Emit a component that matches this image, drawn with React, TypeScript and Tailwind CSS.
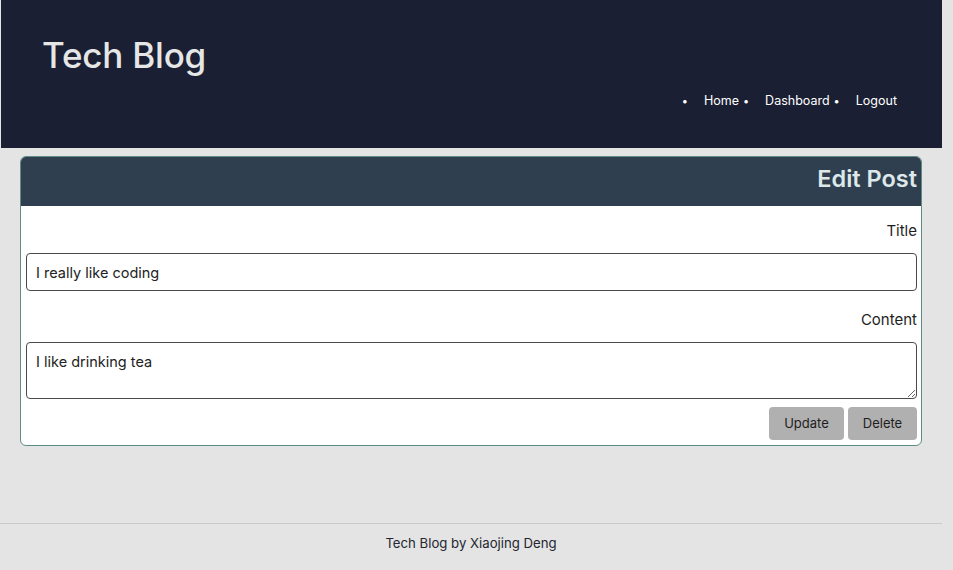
import React from "react";

const font = { fontFamily: "Inter, 'Noto Sans', sans-serif" };

function NavItem({ label }: { label: string }) {
  return (
    <li className="flex items-center">
      <span className="text-[11px] leading-none">•</span>
      <span className="ml-[16px]">{label}</span>
    </li>
  );
}

export default function App() {
  return (
    <div className="w-full min-h-[570px] bg-[#e4e4e4]" style={font}>
      <div className="w-[942px] min-h-[570px] flex flex-col">
        <header className="ml-[1px] h-[148px] bg-[#1a1f33] flex flex-col">
          <h1 className="pl-[41px] pt-[33px] text-[35px] leading-[44px] font-medium text-[#e6e6e6] tracking-[-0.2px]">
            Tech Blog
          </h1>
          <nav className="flex justify-end pr-[45px] mt-[16px]">
            <ul className="flex items-center gap-[4px] text-[12.5px] leading-[16px] text-white">
              <NavItem label="Home" />
              <NavItem label="Dashboard" />
              <NavItem label="Logout" />
            </ul>
          </nav>
        </header>

        <main className="flex-1 pt-[8px]">
          <section className="mx-[20px] border border-[#5f8c85] rounded-[6px] bg-white overflow-hidden">
            <div className="h-[49px] bg-[#2f3f4f] flex justify-end pt-[7px] pr-[4px]">
              <h2 className="text-[23.5px] leading-[29px] font-semibold text-[#dde8ea]">Edit Post</h2>
            </div>
            <form className="pl-[5px] pr-[4px] pb-[5px] flex flex-col">
              <label className="mt-[16px] text-right text-[15px] leading-[18px] text-[#1e1e1e]">Title</label>
              <input
                readOnly
                value="I really like coding"
                className="mt-[13px] h-[38px] w-full border border-[#4a4a4a] rounded-[4px] px-[9px] text-[14.5px] text-[#222] outline-none"
              />
              <label className="mt-[20px] text-right text-[15px] leading-[18px] text-[#1e1e1e]">Content</label>
              <textarea
                readOnly
                value="I like drinking tea"
                className="mt-[13px] h-[57px] w-full border border-[#4a4a4a] rounded-[4px] px-[9px] pt-[10px] text-[14.5px] leading-[18px] text-[#222] outline-none"
              />
              <div className="mt-[8px] flex justify-end gap-[4px]">
                <button type="button" className="h-[33px] w-[75px] bg-[#b0b0b0] rounded-[4px] text-[13px] text-[#1e1e1e]">
                  Update
                </button>
                <button type="button" className="h-[33px] w-[69px] bg-[#b0b0b0] rounded-[4px] text-[13px] text-[#1e1e1e]">
                  Delete
                </button>
              </div>
            </form>
          </section>
        </main>

        <footer className="h-[47px] border-t border-[#c9c9c9] flex justify-center pt-[11px]">
          <p className="text-[13.2px] leading-[17px] text-[#23252f]">Tech Blog by Xiaojing Deng</p>
        </footer>
      </div>
    </div>
  );
}
